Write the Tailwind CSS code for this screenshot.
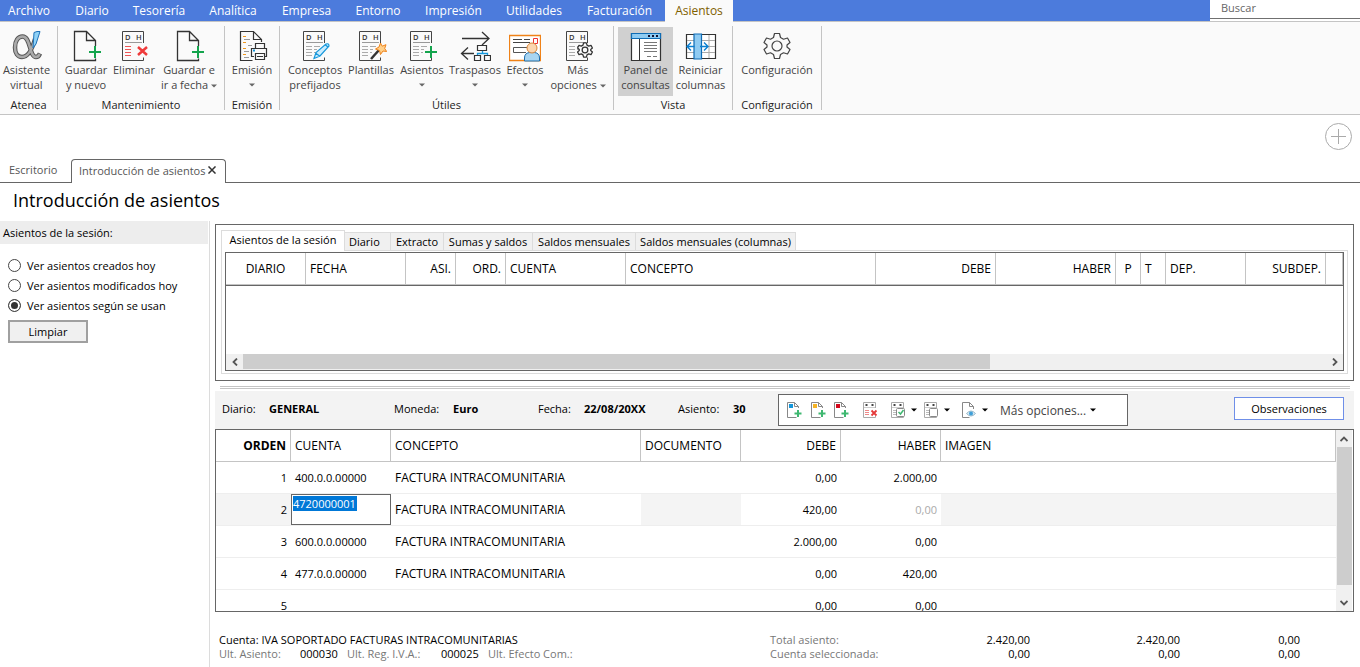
<!DOCTYPE html>
<html lang="es">
<head>
<meta charset="utf-8">
<title>Introducción de asientos</title>
<script src="https://cdn.jsdelivr.net/npm/@tailwindcss/browser@4"></script>
</head>
<body class="flex h-screen flex-col overflow-hidden bg-white font-['Open_Sans','Noto_Sans',sans-serif] text-[11px] leading-[15px] text-black">

<svg class="hidden" aria-hidden="true">
  <symbol id="page" viewBox="0 0 32 32">
    <path d="M25.5 16v-5.500l-9-9H4.500v29h21v-2M16.500 1.500v9h9" fill="none" stroke="#333" stroke-width="1.300"/>
  </symbol>
  <symbol id="plus" viewBox="0 0 32 32">
    <path d="M25 16v12M19 22h12" fill="none" stroke="#14a44d" stroke-width="2"/>
  </symbol>
  <symbol id="ledger" viewBox="0 0 32 32">
    <path d="M25.500 13V1.500h-21v29h21v-3" fill="none" stroke="#444"/>
    <text x="7" y="9.500" font-size="7.500" font-weight="600" fill="#333">D</text>
    <text x="18" y="9.500" font-size="7.500" font-weight="600" fill="#333">H</text>
    <path d="M7 12.500h17" stroke="#999"/>
  </symbol>
  <symbol id="rows" viewBox="0 0 32 32">
    <path d="M7 16.500h6M7 19.500h6M7 22.500h6M7 25.500h6M15 16.500h6M15 19.500h3M15 22.500h2" stroke="#aaa"/>
  </symbol>
  <symbol id="gear" viewBox="0 0 28 28">
    <path d="M10.500 5.500 11.500 1.500h5l1 4 3 1.700 4-1.200 2.500 4.500-3 2.500v2l3 2.500-2.500 4.500-4-1.200-3 1.700-1 4h-5l-1-4-3-1.700-4 1.200L1 17.500 4 15v-2l-3-2.500L3.500 6l4 1.200z" stroke-linejoin="round"/>
    <circle cx="14" cy="14" r="5"/>
  </symbol>
  <symbol id="caret" viewBox="0 0 6 4"><path d="M0 0.500h6l-3 3z"/></symbol>
  <symbol id="mini-page" viewBox="0 0 16 16">
    <path d="M11.500 6V4.500l-4-4h-7v15h9M7.500.5v4h4" fill="none" stroke="#888"/>
    <path d="M11 8v7M7.500 11.500h7" stroke="#3fb871" stroke-width="2"/>
  </symbol>
  <symbol id="mini-ledger" viewBox="0 0 16 16">
    <path d="M12.500 6V.5H.5v15h12V14" fill="none" stroke="#aaa"/>
    <path d="M2.500 3h2M8.500 3h2" stroke="#444" stroke-width="2"/>
    <path d="M1 5.500h11" stroke="#ccc"/>
  </symbol>
</svg>

<header class="flex h-[21px] shrink-0 bg-[#4c7bdc] text-white">
  <nav class="flex text-center text-[12px] leading-[21px]">
    <a href="#" class="mr-1 w-[58px]">Archivo</a>
    <a href="#" class="w-[60px]">Diario</a>
    <a href="#" class="w-[74px]">Tesorería</a>
    <a href="#" class="w-[74px]">Analítica</a>
    <a href="#" class="w-[73px]">Empresa</a>
    <a href="#" class="w-[70px]">Entorno</a>
    <a href="#" class="w-[81px]">Impresión</a>
    <a href="#" class="w-[80px]">Utilidades</a>
    <a href="#" class="w-[91px]">Facturación</a>
    <a href="#" aria-current="page" class="z-10 h-[22px] w-[68px] bg-[#fafafa] text-[#7f6000]">Asientos</a>
  </nav>
  <label class="ml-auto h-[22px] w-[150px] bg-white">
    <span class="sr-only">Buscar</span>
    <input type="text" placeholder="Buscar" class="block h-[19px] w-full border-b border-[#707070] pb-[3px] pl-[11px] placeholder:text-[#666] focus:outline-none">
  </label>
</header>

<section aria-label="Cinta de opciones" class="flex h-[94px] shrink-0 border-y border-[#c4c4c4] bg-[#fafafa] text-center text-[#444]">
  <div class="my-1 flex w-[58px] flex-col justify-between border-r border-[#c4c4c4]">
    <button class="flex w-[53px] flex-col items-center pt-1">
      <svg class="size-8" viewBox="0 0 32 32" fill="none"><path id="alpha" d="M24 9C21 20 17 27 11 27C6.500 27 4 23 4 17.500C4 11 7 6.500 11.500 6.500C20 6.500 18 27 25 27Q27.500 27 29 23.500" stroke="#555" stroke-width="4.500"/><use href="#alpha" class="hidden"/><path d="M24 9C21 20 17 27 11 27C6.500 27 4 23 4 17.500C4 11 7 6.500 11.500 6.500C20 6.500 18 27 25 27Q27.500 27 28.500 24" stroke="#aaa" stroke-width="2.500"/><path d="M23 2.500q3-1.500 6-1L25 14l-3 4z" fill="#8fd2f7" stroke="#1f72b8"/></svg>
      <span>Asistente<br>virtual</span>
    </button>
    <h2 class="leading-[10px] text-[#222]">Atenea</h2>
  </div>
  <div class="my-1 flex w-[167px] flex-col justify-between border-r border-[#c4c4c4]">
    <div class="flex items-start pl-1">
      <button class="flex w-12 flex-col items-center pt-1">
        <svg class="size-8"><use href="#page"/><use href="#plus"/></svg>
        <span>Guardar<br>y nuevo</span>
      </button>
      <button class="flex w-12 flex-col items-center pt-1">
        <svg class="size-8" viewBox="0 0 32 32"><use href="#ledger"/><path d="M7 16.500h6M7 19.500h6M7 22.500h6M7 25.500h6" stroke="#e55"/><path d="M20 17l9 8M29 17l-9 8" stroke="#ef3b3b" stroke-width="2.500"/></svg>
        <span>Eliminar</span>
      </button>
      <button class="flex w-[62px] flex-col items-center pt-1">
        <svg class="size-8"><use href="#page"/><use href="#plus"/></svg>
        <span class="whitespace-nowrap">Guardar e<br>ir a fecha <svg class="inline h-1 w-1.5 fill-[#666]"><use href="#caret"/></svg></span>
      </button>
    </div>
    <h2 class="leading-[10px] text-[#222]">Mantenimiento</h2>
  </div>
  <div class="my-1 flex w-[55px] flex-col justify-between border-r border-[#c4c4c4]">
    <button class="flex flex-col items-center pt-1">
      <svg class="size-8" viewBox="0 0 32 32"><path d="M25.500 12v-2.500l-8-8h-13v29h12M17.500 1.500v8h8" fill="none" stroke="#333" stroke-width="1.200"/><path d="M7 6.500h3M7 12.500h3M7 18.500h3M7 24.500h3" stroke="#f0981e"/><path d="M8 9.500h6M12 15.500h4M8 21.500h5M8 27.500h5" stroke="#999"/><path d="M19.500 19v-5.500h9V19M18 26.500h-2.500v-8h15v8H28M19.500 23.500h9v6h-9zM21 26.500h6" fill="#fafafa" stroke="#333" stroke-width="1.200"/><path d="M17 20.500h2" stroke="#1597db" stroke-width="2"/></svg>
      <span>Emisión</span>
      <svg class="mt-1.5 h-1 w-1.5 fill-[#666]"><use href="#caret"/></svg>
    </button>
    <h2 class="leading-[10px] text-[#222]">Emisión</h2>
  </div>
  <div class="my-1 flex w-[334px] flex-col justify-between border-r border-[#c4c4c4]">
    <div class="flex items-start pl-[5px]">
      <button class="flex w-[60px] flex-col items-center pt-1">
        <svg class="size-8" viewBox="0 0 32 32"><use href="#ledger"/><use href="#rows"/><path d="M15 28.500l2-6L27 14q3-1 3 2l-9 10zM16.500 23l4 3M26 14.500l3.500 3" fill="#c9ecff" stroke="#1597db" stroke-width="1.200"/></svg>
        <span>Conceptos<br>prefijados</span>
      </button>
      <button class="flex w-[52px] flex-col items-center pt-1">
        <svg class="size-8" viewBox="0 0 32 32"><use href="#ledger"/><use href="#rows"/><path d="M16 29l8-9" stroke="#333" stroke-width="2.500"/><path d="M25.500 13l1.700 3.200 3.800-1.500-1.300 3.800 2 3-3.700-.5-2.500 3.500-1-4-4-1.500 3.500-2z" fill="#ffd08a" stroke="#ef8218"/></svg>
        <span>Plantillas</span>
      </button>
      <button class="flex w-[50px] flex-col items-center pt-1">
        <svg class="size-8"><use href="#ledger"/><use href="#rows"/><use href="#plus"/></svg>
        <span>Asientos</span>
        <svg class="mt-1.5 h-1 w-1.5 fill-[#666]"><use href="#caret"/></svg>
      </button>
      <button class="flex w-14 flex-col items-center pt-1">
        <svg class="size-8" viewBox="0 0 32 32"><path d="M3 8.500h27M23 2l7 6.500-7 6.500M15 23.500H3M9 17.500l-6.500 6 6.500 6" fill="none" stroke="#333" stroke-width="1.300"/><path d="M23.500 21v3M18.500 26v-2.500h10V26" fill="none" stroke="#1597db" stroke-width="1.300"/><path d="M18.500 15.500h9v5h-9zM15.500 25.500h6v5h-6zM25.500 25.500h6v5h-6z" fill="#fafafa" stroke="#333" stroke-width="1.200"/></svg>
        <span>Traspasos</span>
        <svg class="mt-1.5 h-1 w-1.5 fill-[#666]"><use href="#caret"/></svg>
      </button>
      <button class="flex w-11 flex-col items-center pt-1">
        <svg class="size-8" viewBox="0 0 32 32"><path d="M.5 5.500h31v25H.5z" fill="#fff" stroke="#ef8218" stroke-width="1.300"/><path d="M4 9.500h9M15 9.500h6M4 12.500h17" stroke="#444"/><path d="M24.500 8.500h4v5h-4z" fill="none" stroke="#e33"/><path d="M18 17.500H4.500v5H17" fill="none" stroke="#555"/><path d="M15.500 31v-3q0-5 5-5.500h5q5 .5 5 5.500v3z" fill="#a8d5f2" stroke="#1d6eae"/><circle cx="23" cy="18" r="5" fill="#fbd6b0" stroke="#d9863a"/></svg>
        <span>Efectos</span>
        <svg class="mt-1.5 h-1 w-1.5 fill-[#666]"><use href="#caret"/></svg>
      </button>
      <button class="flex w-[62px] flex-col items-center pt-1">
        <svg class="size-8" viewBox="0 0 32 32"><use href="#ledger"/><use href="#rows"/><use href="#gear" x="15" y="12" width="16" height="16" fill="#fafafa" stroke="#333" stroke-width="2.200"/></svg>
        <span class="whitespace-nowrap">Más<br>opciones <svg class="inline h-1 w-1.5 fill-[#666]"><use href="#caret"/></svg></span>
      </button>
    </div>
    <h2 class="leading-[10px] text-[#222]">Útiles</h2>
  </div>
  <div class="my-1 flex w-[119px] flex-col justify-between border-r border-[#c4c4c4]">
    <div class="flex items-start pl-1">
      <button aria-pressed="true" class="mt-px flex h-[69px] w-[55px] flex-col items-center bg-[#d0d0d0] pt-[3px]">
        <svg class="size-8" viewBox="0 0 32 32"><path d="M1.500 3.500h29v27h-29z" fill="#fff" stroke="#333" stroke-width="1.200"/><path d="M1.500 3.500h29v5h-29z" fill="#8fcbf2" stroke="#0f6cb5" stroke-width="1.200"/><path d="M18 6h2M22 6h2M26 6h2" stroke="#113" stroke-width="2"/><path d="M9.500 9v21" stroke="#333"/><path d="M14 12.500h13M14 15.500h13M14 18.500h13M14 21.500h13M17 26.500h4M23 26.500h4" stroke="#777"/></svg>
        <span>Panel de<br>consultas</span>
      </button>
      <button class="flex w-[55px] flex-col items-center pt-1">
        <svg class="size-8" viewBox="0 0 32 32"><path d="M1.500 4.500h29v24h-29z" fill="#fff" stroke="#333" stroke-width="1.200"/><path d="M2 10.500h28M2 16.500h28M2 22.500h28M24 5v23" stroke="#aaa"/><path d="M9 4h7.500v25H9z" fill="#8fcbf2" stroke="#0f6cb5" stroke-width="1.200"/><path d="M9.500 16.500H2M6 12.500l-4 4 4 4M15 16.500h8M19 12.500l4 4-4 4" fill="none" stroke="#0b7fd0" stroke-width="1.400"/></svg>
        <span>Reiniciar<br>columnas</span>
      </button>
    </div>
    <h2 class="leading-[10px] text-[#222]">Vista</h2>
  </div>
  <div class="my-1 flex w-[89px] flex-col justify-between border-r border-[#c4c4c4]">
    <button class="flex flex-col items-center pt-1">
      <svg class="size-8" viewBox="0 0 32 32"><use href="#gear" x="2" y="2" width="28" height="28" fill="none" stroke="#444" stroke-width="1.200"/></svg>
      <span>Configuración</span>
    </button>
    <h2 class="leading-[10px] text-[#222]">Configuración</h2>
  </div>
</section>

<div class="flex h-[68px] shrink-0 items-end text-[#555]">
  <a href="#" class="h-6 w-[71px] border-b border-[#666] pl-[9px] pt-[3px]">Escritorio</a>
  <div class="flex h-6 w-[155px] items-center justify-between rounded-t-[4px] border-x border-t border-[#666] pb-[3px] pl-[7px] pr-[9px]">
    <a href="#">Introducción de asientos</a>
    <button aria-label="Cerrar pestaña"><svg class="size-2" viewBox="0 0 9 9"><path d="M.5.5l8 8M8.500.5l-8 8" stroke="#333" stroke-width="1.700"/></svg></button>
  </div>
  <div class="flex h-full flex-1 items-start justify-end border-b border-[#666] pr-2 pt-2">
    <button aria-label="Nueva pestaña"><svg class="size-[27px]" viewBox="0 0 27 27" fill="none" stroke="#aaa"><circle cx="13.500" cy="13.500" r="13"/><path d="M13.500 6v15M6 13.500h15"/></svg></button>
  </div>
</div>

<h1 class="h-[38px] shrink-0 pl-[13px] text-[18px] leading-[35px]">Introducción de asientos</h1>

<div class="flex min-h-0 flex-1">
  <aside class="w-[210px] shrink-0 border-r border-[#dcdcdc] pr-px">
    <fieldset>
      <legend class="h-[23px] w-full bg-[#ededed] pl-[3px] leading-[23px]">Asientos de la sesión:</legend>
      <div class="flex flex-col gap-[5px] pl-2 pt-[14px]">
        <label class="flex items-center gap-1.5"><input type="radio" name="ver" class="size-[13px] appearance-none rounded-full border border-[#444] bg-white">Ver asientos creados hoy</label>
        <label class="flex items-center gap-1.5"><input type="radio" name="ver" class="size-[13px] appearance-none rounded-full border border-[#444] bg-white">Ver asientos modificados hoy</label>
        <label class="flex items-center gap-1.5"><input type="radio" name="ver" checked class="size-[13px] appearance-none rounded-full border border-[#444] bg-white checked:bg-[#333] checked:shadow-[inset_0_0_0_2px_white]">Ver asientos según se usan</label>
      </div>
    </fieldset>
    <button class="ml-2 mt-[7px] h-[23px] w-20 border-2 border-[#a0a0a0] bg-[#f0f0f0]">Limpiar</button>
  </aside>

  <main class="flex min-w-0 flex-1 flex-col pl-[5px] pr-1.5 pt-[3px]">
    <section aria-label="Consultas" class="flex h-[157px] shrink-0 flex-col border border-[#666] px-[5px] pb-1.5 pt-[5px]">
      <div role="tablist" class="z-10 flex h-5 items-end">
        <button role="tab" aria-selected="true" class="-mb-px h-[21px] w-[124px] border-x border-t border-[#dcdcdc] bg-white pb-1">Asientos de la sesión</button>
        <button role="tab" class="h-[18px] w-[46px] border-r border-t border-[#dcdcdc] bg-[#f0f0f0] pl-1 text-left">Diario</button>
        <button role="tab" class="h-[18px] w-[53px] border-r border-t border-[#dcdcdc] bg-[#f0f0f0]">Extracto</button>
        <button role="tab" class="h-[18px] w-[89px] border-r border-t border-[#dcdcdc] bg-[#f0f0f0]">Sumas y saldos</button>
        <button role="tab" class="h-[18px] w-[103px] border-r border-t border-[#dcdcdc] bg-[#f0f0f0]">Saldos mensuales</button>
        <button role="tab" class="h-[18px] w-[160px] border-r border-t border-[#dcdcdc] bg-[#f0f0f0]">Saldos mensuales (columnas)</button>
      </div>
      <div role="tabpanel" class="flex flex-1 border border-[#dcdcdc] px-[3px] pb-0.5 pt-px">
        <div class="flex min-w-0 flex-1 flex-col justify-between overflow-hidden border border-[#666]">
          <table class="w-full table-fixed border-separate border-spacing-0 border-b border-[#666]">
            <colgroup><col class="w-20"><col class="w-[100px]"><col class="w-[50px]"><col class="w-[50px]"><col class="w-[120px]"><col class="w-[250px]"><col class="w-[120px]"><col class="w-[120px]"><col class="w-[25px]"><col class="w-[25px]"><col class="w-20"><col class="w-20"><col></colgroup>
            <thead><tr class="h-8 text-left text-[12px] *:border-b *:border-r *:border-[#c4c4c4] *:px-1 *:py-0 *:font-normal">
              <th class="text-center">DIARIO</th><th>FECHA</th><th class="text-right">ASI.</th><th class="text-right">ORD.</th><th>CUENTA</th><th>CONCEPTO</th><th class="text-right">DEBE</th><th class="text-right">HABER</th><th class="text-center">P</th><th>T</th><th>DEP.</th><th class="text-right">SUBDEP.</th><th></th>
            </tr></thead>
          </table>
          <div class="flex h-4 bg-[#f0f0f0]">
            <button aria-label="Desplazar a la izquierda" class="grid w-[17px] place-items-center"><svg class="h-2 w-1.5" viewBox="0 0 6 8"><path d="M5 .5L1.500 4 5 7.500" fill="none" stroke="#555" stroke-width="1.800"/></svg></button>
            <div class="flex-1"><div class="h-[15px] w-[69%] bg-[#cdcdcd]"></div></div>
            <button aria-label="Desplazar a la derecha" class="grid w-[17px] place-items-center"><svg class="h-2 w-1.5" viewBox="0 0 6 8"><path d="M1 .5L4.500 4 1 7.500" fill="none" stroke="#555" stroke-width="1.800"/></svg></button>
          </div>
        </div>
      </div>
    </section>

    <div class="ml-[5px] mr-1 mt-[5px] h-[3px] shrink-0 border-y border-[#c4c4c4]"></div>

    <section aria-label="Asiento" class="mt-0.5 flex h-[38px] shrink-0 items-center bg-[#f3f3f3] pl-[7px] pr-2.5">
      <dl class="flex pb-[3px]">
        <dt class="w-[47px]">Diario:</dt><dd class="w-[125px] font-bold">GENERAL</dd>
        <dt class="w-[59px]">Moneda:</dt><dd class="w-[85px] font-bold">Euro</dd>
        <dt class="w-[46px]">Fecha:</dt><dd class="w-[94px] font-bold">22/08/20XX</dd>
        <dt class="w-[55px]">Asiento:</dt><dd class="w-[45px] font-bold">30</dd>
      </dl>
      <div role="toolbar" class="flex h-8 w-[350px] items-center border border-[#666] bg-white pl-2 text-[#444]">
        <button aria-label="Nuevo apunte" class="mr-2"><svg class="size-4" viewBox="0 0 16 16"><use href="#mini-page"/><path d="M2 2h4v4H2z" fill="#1597db"/></svg></button>
        <button aria-label="Insertar apunte" class="mr-[7px]"><svg class="size-4" viewBox="0 0 16 16"><use href="#mini-page"/><path d="M2 2h4v4H2z" fill="#f5b324"/></svg></button>
        <button aria-label="Duplicar apunte" class="mr-[13px]"><svg class="size-4" viewBox="0 0 16 16"><use href="#mini-page"/><path d="M2 2h4v4H2z" fill="#d3081c"/></svg></button>
        <button aria-label="Eliminar apunte" class="mr-3"><svg class="size-4" viewBox="0 0 16 16"><use href="#mini-ledger"/><path d="M2 8.500h4M2 10.500h4M2 12.500h4" stroke="#e88"/><path d="M8.500 8.500l5 5M13.500 8.500l-5 5" stroke="#e43a3a" stroke-width="1.800"/></svg></button>
        <button aria-label="Marcar apunte" class="mr-[7px] flex items-center gap-1"><svg class="size-4" viewBox="0 0 16 16"><use href="#mini-ledger"/><path d="M2 8.500h3M2 10.500h3M2 12.500h3" stroke="#bbb"/><rect x="5.500" y="6.500" width="8" height="8" rx="1" fill="#fff" stroke="#888"/><path d="M7.500 10l2 2 3-4" fill="none" stroke="#3fb871" stroke-width="1.500"/></svg><svg class="h-1 w-1.5 fill-black"><use href="#caret"/></svg></button>
        <button aria-label="Desmarcar apunte" class="mr-3 flex items-center gap-1"><svg class="size-4" viewBox="0 0 16 16"><use href="#mini-ledger"/><path d="M2 8.500h3M2 10.500h3M2 12.500h3" stroke="#bbb"/><rect x="5.500" y="6.500" width="8" height="8" rx="1" fill="#fff" stroke="#888"/></svg><svg class="h-1 w-1.5 fill-black"><use href="#caret"/></svg></button>
        <button aria-label="Ver documento" class="mr-3 flex items-center gap-1"><svg class="size-4" viewBox="0 0 16 16"><path d="M11.500 7V4.500l-4-4h-7v15h7M7.500.5v4h4" fill="none" stroke="#888"/><path d="M4.500 11.500q4.500-5 9 0-4.500 5-9 0z" fill="#d5ebf7" stroke="#9ab8c8"/><circle cx="9" cy="11.500" r="2" fill="#3f9fd8"/></svg><svg class="h-1 w-1.5 fill-black"><use href="#caret"/></svg></button>
        <button class="flex items-center gap-1 text-[12px]">Más opciones... <svg class="h-1 w-1.5 fill-black"><use href="#caret"/></svg></button>
      </div>
      <button class="mb-[3px] ml-auto h-[23px] w-[110px] border border-[#6f8fe8] bg-white">Observaciones</button>
    </section>

    <section aria-label="Apuntes" class="flex min-h-0 flex-1 border border-[#666]">
      <div class="min-w-0 flex-1 overflow-hidden">
        <table class="w-full table-fixed border-separate border-spacing-0 text-[12px]">
          <colgroup><col class="w-[75px]"><col class="w-[100px]"><col class="w-[250px]"><col class="w-[100px]"><col class="w-[100px]"><col class="w-[100px]"><col></colgroup>
          <thead><tr class="h-8 text-left *:border-b *:border-r *:border-[#c4c4c4] *:px-1 *:py-0 *:font-normal">
            <th class="text-right"><b>ORDEN</b></th><th>CUENTA</th><th>CONCEPTO</th><th>DOCUMENTO</th><th class="text-right">DEBE</th><th class="text-right">HABER</th><th>IMAGEN</th>
          </tr></thead>
          <tbody class="text-[11px]">
            <tr class="h-8 *:border-b *:border-[#eee] *:px-1 *:py-0"><td class="text-right">1</td><td>400.0.0.00000</td><td class="text-[12px]">FACTURA INTRACOMUNITARIA</td><td></td><td class="text-right">0,00</td><td class="text-right">2.000,00</td><td></td></tr>
            <tr class="h-8 *:border-b *:border-[#eee]"><td class="bg-[#f4f4f4] px-1 text-right">2</td>
              <td class="p-0"><div class="h-[31px] border border-[#666] px-px pt-px"><input type="text" aria-label="Cuenta" value="4720000001" class="block h-[15px] w-16 bg-[#0078d7] text-white focus:outline-none"></div></td>
              <td class="px-1 text-[12px]">FACTURA INTRACOMUNITARIA</td><td class="bg-[#f4f4f4]"></td><td class="px-1 text-right">420,00</td><td class="px-1 text-right text-[#aaa]">0,00</td><td class="bg-[#f4f4f4]"></td></tr>
            <tr class="h-8 *:border-b *:border-[#eee] *:px-1 *:py-0"><td class="text-right">3</td><td>600.0.0.00000</td><td class="text-[12px]">FACTURA INTRACOMUNITARIA</td><td></td><td class="text-right">2.000,00</td><td class="text-right">0,00</td><td></td></tr>
            <tr class="h-8 *:border-b *:border-[#eee] *:px-1 *:py-0"><td class="text-right">4</td><td>477.0.0.00000</td><td class="text-[12px]">FACTURA INTRACOMUNITARIA</td><td></td><td class="text-right">0,00</td><td class="text-right">420,00</td><td></td></tr>
            <tr class="h-8 *:border-b *:border-[#eee] *:px-1 *:py-0"><td class="text-right">5</td><td></td><td></td><td></td><td class="text-right">0,00</td><td class="text-right">0,00</td><td></td></tr>
          </tbody>
        </table>
      </div>
      <div class="mr-px flex w-4 flex-col bg-[#f0f0f0]">
        <button aria-label="Desplazar arriba" class="grid h-[17px] place-items-center"><svg class="h-1.5 w-2" viewBox="0 0 8 6"><path d="M.5 5L4 1.500 7.500 5" fill="none" stroke="#555" stroke-width="1.800"/></svg></button>
        <div class="flex-1"><div class="ml-px h-[94%] bg-[#cdcdcd]"></div></div>
        <button aria-label="Desplazar abajo" class="grid h-[17px] place-items-center"><svg class="h-1.5 w-2" viewBox="0 0 8 6"><path d="M.5 1L4 4.500 7.500 1" fill="none" stroke="#555" stroke-width="1.800"/></svg></button>
      </div>
    </section>

    <footer class="flex h-[55px] shrink-0 pl-1 pt-[21px] leading-[14px]">
      <div class="w-[551px]">
        <p>Cuenta: IVA SOPORTADO FACTURAS INTRACOMUNITARIAS</p>
        <dl class="flex text-[#777]">
          <dt class="w-[81px]">Ult. Asiento:</dt><dd class="w-[47px] text-black">000030</dd>
          <dt class="w-[94px]">Ult. Reg. I.V.A.:</dt><dd class="w-[47px] text-black">000025</dd>
          <dt>Ult. Efecto Com.:</dt>
        </dl>
      </div>
      <table class="h-7 table-fixed">
        <tbody>
          <tr><th class="w-[140px] p-0 text-left font-normal text-[#777]">Total asiento:</th><td class="w-[120px] p-0 text-right">2.420,00</td><td class="w-[150px] p-0 text-right">2.420,00</td><td class="w-[120px] p-0 text-right">0,00</td></tr>
          <tr><th class="p-0 text-left font-normal text-[#777]">Cuenta seleccionada:</th><td class="p-0 text-right">0,00</td><td class="p-0 text-right">0,00</td><td class="p-0 text-right">0,00</td></tr>
        </tbody>
      </table>
    </footer>
  </main>
</div>
</body>
</html>
